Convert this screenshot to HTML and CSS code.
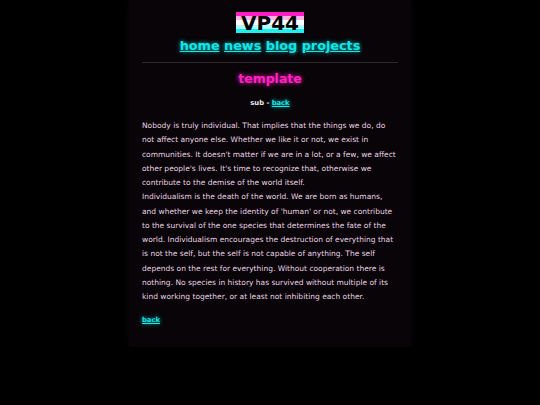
FILE: index.html
```html
<!DOCTYPE html>
<html>
<head>
<meta charset="utf-8">
<link rel="stylesheet" href="styles.css">
</head>
<body>
<div class="page">
  <header class="top">
    <div class="logo">VP44</div>
    <nav class="nav">
      <a href="#">home</a> <a href="#">news</a> <a href="#">blog</a> <a href="#">projects</a>
    </nav>
  </header>
  <hr class="rule">
  <h1 class="title">template</h1>
  <p class="sub">sub - <a href="#">back</a></p>
  <p class="text">Nobody is truly individual. That implies that the things we do, do not affect anyone else. Whether we like it or not, we exist in communities. It doesn't matter if we are in a lot, or a few, we affect other people's lives. It's time to recognize that, otherwise we contribute to the demise of the world itself.<br>Individualism is the death of the world. We are born as humans, and whether we keep the identity of 'human' or not, we contribute to the survival of the one species that determines the fate of the world. Individualism encourages the destruction of everything that is not the self, but the self is not capable of anything. The self depends on the rest for everything. Without cooperation there is nothing. No species in history has survived without multiple of its kind working together, or at least not inhibiting each other.</p>
  <p class="back"><a href="#">back</a></p>
</div>
</body>
</html>
```

FILE: styles.css
```css
html, body {
  margin: 0;
  padding: 0;
  background: #000;
}
body {
  font-family: "DejaVu Sans", Verdana, sans-serif;
  color: #e8d2e2;
}
.page {
  width: 256px;
  margin: 0 auto;
  padding: 12px 13px 22px;
  background: #080408;
  box-shadow: 0 0 12px #0a050a;
}
.top {
  display: flex;
  flex-direction: column;
  align-items: center;
}
.logo {
  width: 68px;
  height: 21px;
  line-height: 22px;
  text-align: center;
  font-weight: bold;
  font-size: 20px;
  color: #000;
  background: linear-gradient(#ff1ec6 0 20%, #ffb6e6 20% 40%, #ffffff 40% 60%, #b4fbff 60% 80%, #1ef0f0 80% 100%);
}
.nav {
  margin-top: 3px;
  font-size: 12.8px;
  font-weight: bold;
  line-height: 20px;
}
.nav a, .sub a, .back a {
  color: #13e6e6;
  text-shadow: 0 0 4px #0cc;
}
.rule {
  border: 0;
  border-top: 1px solid #2a2a2e;
  margin: 6px 0 0;
}
.title {
  margin: 6px 0 0;
  text-align: center;
  font-size: 12.5px;
  line-height: 20px;
  color: #ff22c4;
  text-shadow: 0 0 5px #ff1ab8;
}
.sub {
  margin: 9px 0 0;
  text-align: center;
  font-size: 6.8px;
  font-weight: bold;
  color: #eee;
  line-height: 10px;
}
.text {
  margin: 11px 0 0;
  font-size: 7.5px;
  line-height: 14.25px;
}
.back {
  margin: 11px 0 0;
  font-size: 6.8px;
  font-weight: bold;
  line-height: 10px;
}
```
